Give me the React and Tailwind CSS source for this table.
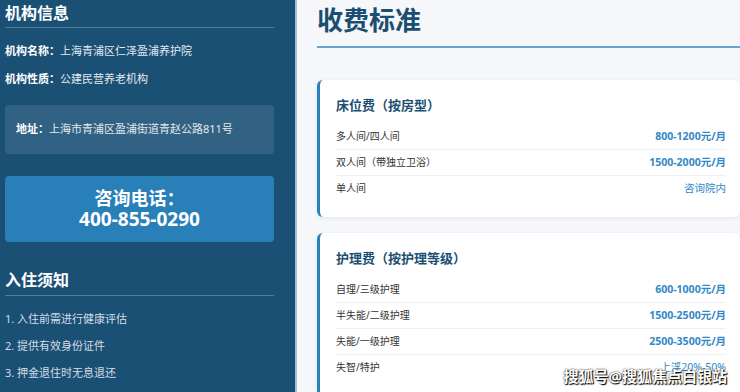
import React from 'react';

const bedFees = [
  { label: '多人间/四人间', value: '800-1200元/月', bold: true },
  { label: '双人间（带独立卫浴）', value: '1500-2000元/月', bold: true },
  { label: '单人间', value: '咨询院内', bold: false },
];

const careFees = [
  { label: '自理/三级护理', value: '600-1000元/月', bold: true },
  { label: '半失能/二级护理', value: '1500-2500元/月', bold: true },
  { label: '失能/一级护理', value: '2500-3500元/月', bold: true },
  { label: '失智/特护', value: '上浮20%-50%', bold: false },
];

const FeeCard = ({ title, rows, className }) => (
  <div className={`bg-white rounded-[6px] border-l-[3px] border-[#2a80b9] pl-[16px] pr-[14px] pt-[15px] pb-[16px] shadow-[0_1px_4px_rgba(0,0,0,0.08)] ${className}`}>
    <h3 className="text-[13px] leading-[20px] font-bold text-[#1b4f72]">{title}</h3>
    <div className="mt-[9px]">
      {rows.map((r, i) => (
        <div
          key={r.label}
          className={`flex items-center justify-between py-[4px] leading-[17px] ${i < rows.length - 1 ? 'border-b border-[#eef0f2]' : ''}`}
        >
          <span className="text-[10px] text-[#333]">{r.label}</span>
          <span className={`text-[10.5px] text-[#3288c4] ${r.bold ? 'font-bold' : ''}`}>{r.value}</span>
        </div>
      ))}
    </div>
  </div>
);

export default function App() {
  return (
    <div className="relative flex w-[740px] h-[392px] overflow-hidden bg-[#f5f7fa] font-['Noto_Sans','Noto_Sans_CJK_SC',sans-serif]">
      {/* sidebar */}
      <aside className="w-[297px] shrink-0 bg-[#1b5075] border-r-2 border-[#a9bfd0] px-[5px] pt-[3px] text-white">
        <div className="w-[269px]">
          <h2 className="text-[16px] leading-[21px] font-bold pb-[3px] border-b border-white/25">机构信息</h2>
          <div className="mt-[13px] flex flex-col gap-[8px] text-[11px] leading-[20px]">
            <p><span className="font-bold">机构名称：</span><span className="text-[#e3e9ef]">上海青浦区仁泽盈浦养护院</span></p>
            <p><span className="font-bold">机构性质：</span><span className="text-[#e3e9ef]">公建民营养老机构</span></p>
          </div>
          <div className="mt-[16px] h-[49px] flex items-center px-[11px] rounded-[4px] bg-white/10 text-[11px]">
            <span className="font-bold">地址：</span><span className="text-[#e3e9ef]">上海市青浦区盈浦街道青赵公路811号</span>
          </div>
          <div className="mt-[22px] h-[66px] flex flex-col justify-center items-center rounded-[4px] bg-[#2980b9] leading-[21px] font-bold">
            <span className="text-[18px]">咨询电话：</span>
            <span className="text-[19px]">400-855-0290</span>
          </div>
          <h2 className="mt-[28px] text-[16px] leading-[21px] font-bold pb-[4px] border-b border-white/25">入住须知</h2>
          <ol className="mt-[13px] flex flex-col gap-[7px] text-[11px] leading-[20px] text-[#d3dde6]">
            <li>1. 入住前需进行健康评估</li>
            <li>2. 提供有效身份证件</li>
            <li>3. 押金退住时无息退还</li>
          </ol>
        </div>
      </aside>

      {/* main */}
      <main className="flex-1 pl-[20px] pt-[4px]">
        <h1 className="text-[26px] leading-[32px] font-bold text-[#1b4f72] pb-[10px] border-b-2 border-[#6aa3cf]">收费标准</h1>
        <FeeCard className="mt-[32px]" title="床位费（按房型）" rows={bedFees} />
        <FeeCard className="mt-[16px]" title="护理费（按护理等级）" rows={careFees} />
      </main>

      {/* watermark */}
      <div className="absolute right-[13px] bottom-[6px] text-[15px] leading-[20px] font-bold text-white [text-shadow:0_0_2px_#000,1px_1px_1px_#000]">
        搜狐号@搜狐焦点白银站
      </div>
    </div>
  );
}
